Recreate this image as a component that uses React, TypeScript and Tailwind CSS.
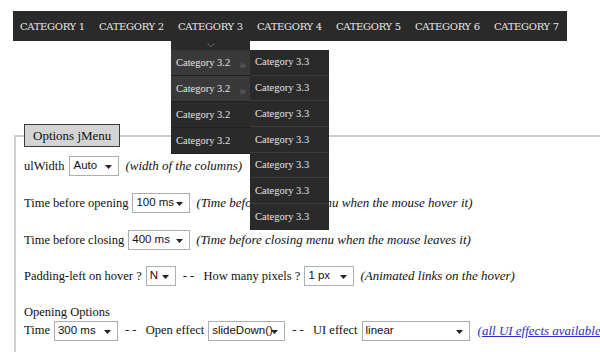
import React from "react";

const serif = { fontFamily: '"Liberation Serif", "Times New Roman", serif' };
const navFont = { fontFamily: '"DejaVu Serif", Georgia, serif' };
const subFont = { fontFamily: '"Liberation Serif", "Times New Roman", serif' };
const sans = { fontFamily: '"Liberation Sans", Arial, sans-serif' };

function Sel({ value, w }: { value: string; w: number }) {
  return (
    <div
      className="relative flex items-center border border-[#a9afb4] bg-white h-[20px] pl-[3px] text-[11.5px] text-[#111] shrink-0 overflow-hidden"
      style={{ ...sans, width: w }}
    >
      <span className="whitespace-nowrap">{value}</span>
      <svg className="absolute right-[6px] top-[8px]" width="7" height="4" viewBox="0 0 7 4">
        <path d="M0 0 H7 L3.5 4 Z" fill="#222" />
      </svg>
    </div>
  );
}

const cats = ["CATEGORY 1", "CATEGORY 2", "CATEGORY 3", "CATEGORY 4", "CATEGORY 5", "CATEGORY 6", "CATEGORY 7"];

export default function App() {
  return (
    <div className="relative w-[600px] h-[352px] overflow-hidden bg-white text-[#111]" style={serif}>
      <div className="pt-[11px] pl-[13px]">
        <div className="flex h-[30px] w-[554px] bg-[#2b2a2b] items-center">
          {cats.map((c) => (
            <div
              key={c}
              className="w-[79px] pl-[7px] text-[10px] text-[#e8e8e8] whitespace-nowrap tracking-[-0.3px]"
              style={navFont}
            >
              {c}
            </div>
          ))}
        </div>
      </div>

      <fieldset className="ml-[14px] mt-[83px] w-[620px] border-2 border-[#cfcfcf] pb-[40px]">
        <legend className="ml-[8px] h-[23px] border border-[#3a3a3a] bg-[#d4d4d4] px-[8px] text-[13px] leading-[21px]">
          Options jMenu
        </legend>
        <div className="pl-[8px] text-[12.5px]">
          <div className="mt-[9px] flex h-[20px] items-center gap-[5px] whitespace-nowrap">
            <span>ulWidth</span>
            <Sel value="Auto" w={50} />
            <i className="ml-[1px] text-[13px]">(width of the columns)</i>
          </div>
          <div className="mt-[17px] flex h-[20px] items-center gap-[4px] whitespace-nowrap">
            <span>Time before opening</span>
            <Sel value="100 ms" w={58} />
            <i className="ml-[2px] text-[13px]">(Time before opening menu when the mouse hover it)</i>
          </div>
          <div className="mt-[17px] flex h-[20px] items-center gap-[4px] whitespace-nowrap">
            <span>Time before closing</span>
            <Sel value="400 ms" w={62} />
            <i className="ml-[2px] text-[13px]">(Time before closing menu when the mouse leaves it)</i>
          </div>
          <div className="mt-[16px] flex h-[20px] items-center gap-[4px] whitespace-nowrap">
            <span>Padding-left on hover ?</span>
            <Sel value="N" w={30} />
            <span className="ml-[3px]">-&nbsp;-&nbsp;&nbsp; How many pixels ?</span>
            <Sel value="1 px" w={50} />
            <i className="ml-[2px] text-[13px]">(Animated links on the hover)</i>
          </div>
          <div className="mt-[18px] h-[16px] leading-[16px] whitespace-nowrap">Opening Options</div>
          <div className="mt-[1px] flex h-[19px] items-center gap-[4px] whitespace-nowrap">
            <span>Time</span>
            <Sel value="300 ms" w={64} />
            <span className="ml-[3px]">-&nbsp;-&nbsp;&nbsp; Open effect</span>
            <Sel value="slideDown()" w={77} />
            <span className="ml-[3px]">-&nbsp;-&nbsp;&nbsp; UI effect</span>
            <Sel value="linear" w={108} />
            <i className="ml-[4px] text-[13px] text-[#2c2ccc]">
              (<span className="underline">all UI effects available.</span>)
            </i>
          </div>
        </div>
      </fieldset>

      {/* Dropdown overlay */}
      <div className="absolute left-[171px] top-[41px]" style={subFont}>
        <div className="flex h-[9px] w-[79px] items-start justify-center bg-[#2b2a2b] pt-[2px]">
          <svg width="8" height="4" viewBox="0 0 8 4">
            <path d="M0.5 0.5 L4 3.5 L7.5 0.5" stroke="#6a6a6a" strokeWidth="1" fill="none" />
          </svg>
        </div>
        <div className="flex items-start">
          <div className="w-[79px]">
            {[0, 1, 2, 3].map((i) => (
              <div
                key={i}
                className={`relative flex h-[26px] items-center border-b border-[#222122] pl-[5px] text-[10.5px] text-[#e2e2e2] ${
                  i < 2 ? "bg-[#3a393a]" : "bg-[#2b2a2b]"
                }`}
              >
                <span>Category 3.2</span>
                {i < 2 && (
                  <span className="absolute right-[4px] top-[4px] text-[13px] text-[#6e6e6e]">»</span>
                )}
              </div>
            ))}
          </div>
          <div className="w-[79px]">
            {[0, 1, 2, 3, 4, 5, 6].map((i) => (
              <div
                key={i}
                className="flex h-[25.7px] items-center border-b border-[#3c3b3c] bg-[#2b2a2b] pl-[5px] text-[10.5px] text-[#e2e2e2] last:border-b-0"
              >
                Category 3.3
              </div>
            ))}
          </div>
        </div>
      </div>
    </div>
  );
}
